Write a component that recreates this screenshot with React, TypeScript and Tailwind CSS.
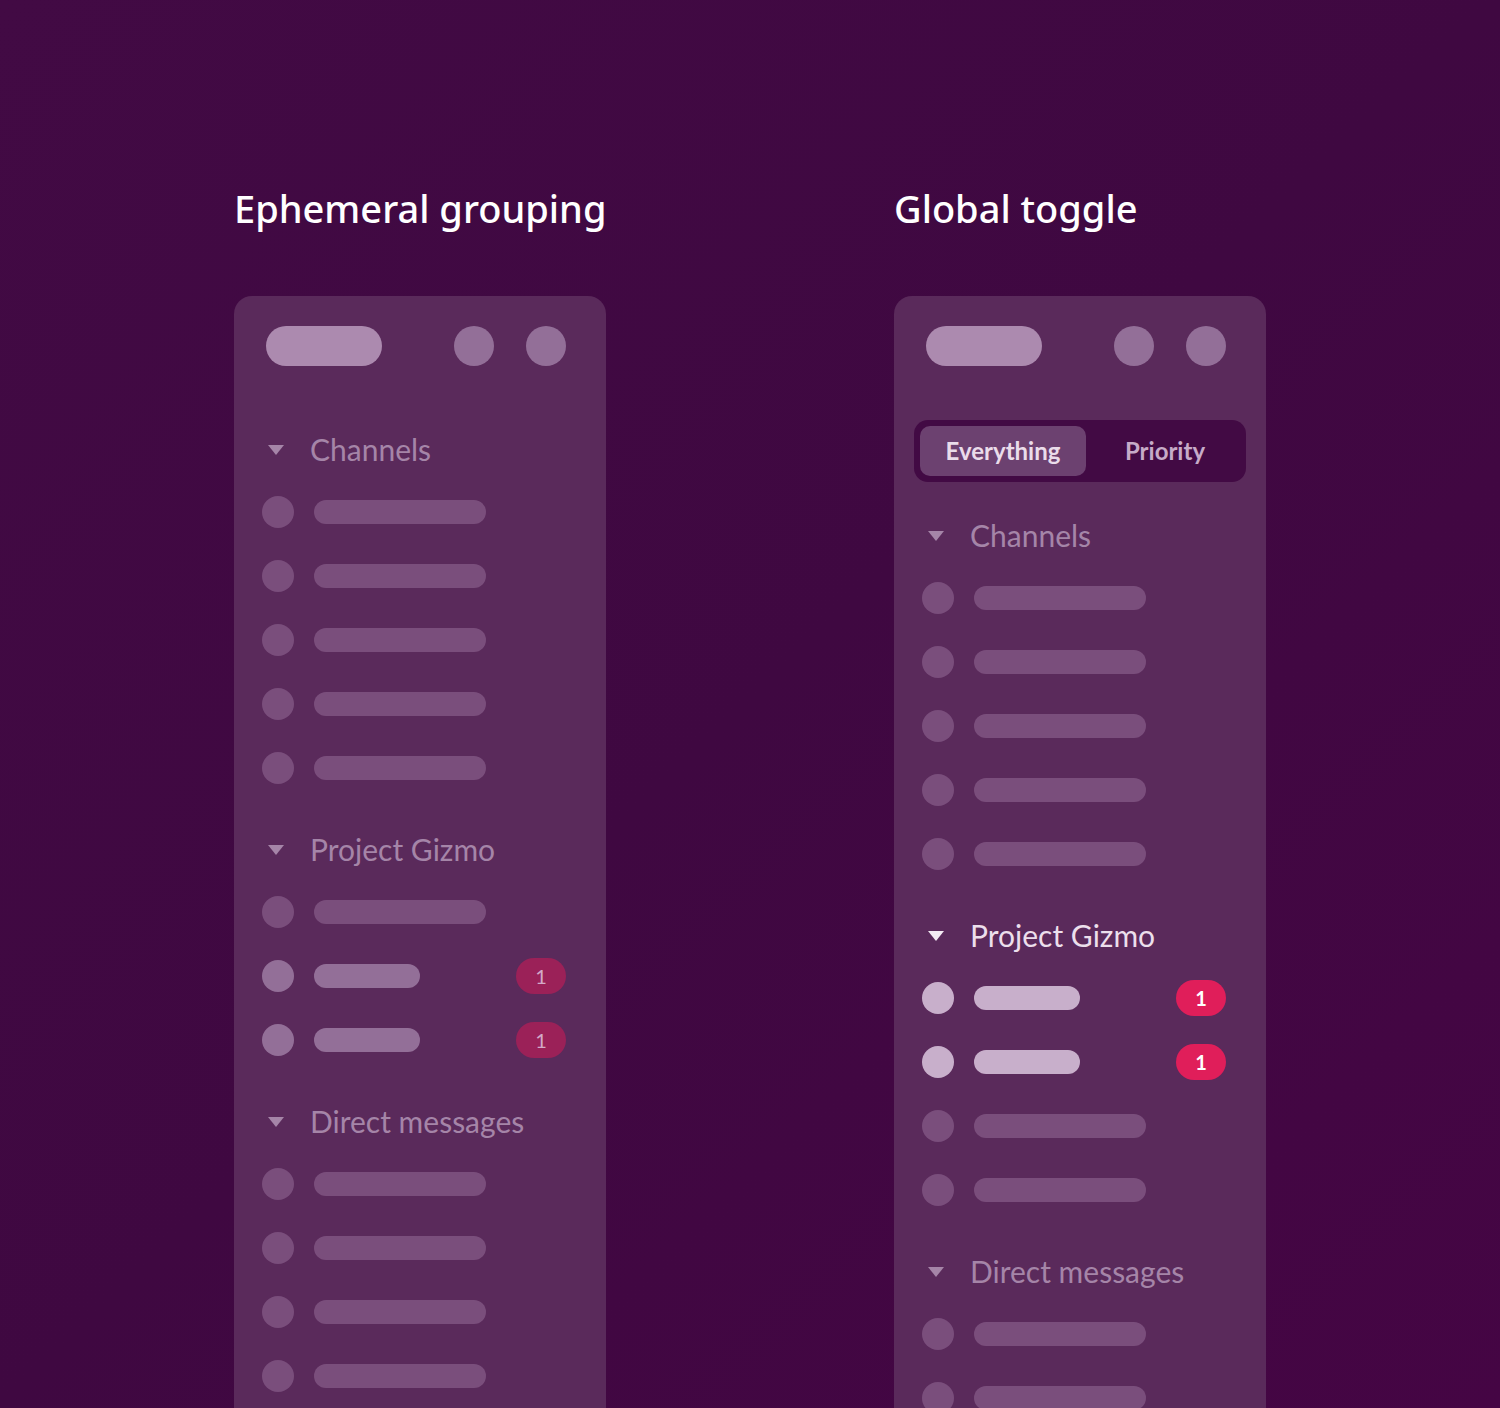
const DIM = 'bg-[#7a4e7c]';

type Row = { short?: boolean; badge?: 'muted' | 'hot' };

function Caret({ bright }: { bright?: boolean }) {
  return (
    <svg width="16" height="10" viewBox="0 0 16 10" className="ml-[6px] shrink-0">
      <path d="M0 0 H16 L8 10 Z" fill={bright ? '#f3eaf3' : '#a585a8'} />
    </svg>
  );
}

function Header({ label, bright, className }: { label: string; bright?: boolean; className: string }) {
  return (
    <div className={`flex items-center h-10 ${className}`}>
      <Caret bright={bright} />
      <span
        className={`ml-[26px] pb-[3px] text-[30px] leading-10 font-['Lato',sans-serif] ${
          bright ? 'text-[#ecdfec]' : 'text-[#a585a8]'
        }`}
      >
        {label}
      </span>
    </div>
  );
}

function Rows({ rows, className = '' }: { rows: Row[]; className?: string }) {
  return (
    <div className={`flex flex-col gap-8 ${className}`}>
      {rows.map((r, i) => {
        const tone = r.badge === 'hot' ? 'bg-[#c8afcb]' : r.badge === 'muted' ? 'bg-[#936f98]' : DIM;
        return (
          <div key={i} className="flex items-center h-8">
            <div className={`w-8 h-8 rounded-full ${tone}`} />
            <div className={`ml-5 h-6 rounded-full ${tone} ${r.short ? 'w-[106px]' : 'w-[172px]'}`} />
            {r.badge && (
              <div
                className={`ml-auto w-[50px] h-9 rounded-full flex items-center justify-center text-[20px] font-['Lato',sans-serif] ${
                  r.badge === 'hot' ? 'bg-[#e01e5a] text-white font-bold' : 'bg-[#9b2158] text-[#d3a9c8]'
                }`}
              >
                1
              </div>
            )}
          </div>
        );
      })}
    </div>
  );
}

function TopBar() {
  return (
    <div className="flex items-center pt-[30px]">
      <div className="ml-1 w-[116px] h-10 rounded-full bg-[#ac8aaf]" />
      <div className="ml-auto w-10 h-10 rounded-full bg-[#936f98]" />
      <div className="ml-8 w-10 h-10 rounded-full bg-[#936f98]" />
    </div>
  );
}

const five: Row[] = [{}, {}, {}, {}, {}];

export default function App() {
  return (
    <div className="h-[1408px] overflow-hidden bg-gradient-to-br from-[#420a44] via-[#3f0841] to-[#450544]">
      <div className="flex gap-[288px] pl-[234px] pt-[184px]">
        {/* Ephemeral grouping */}
        <div className="w-[372px]">
          <h2 className="whitespace-nowrap text-[38px] leading-[48px] font-medium text-white font-['Noto_Sans',sans-serif]">
            Ephemeral grouping
          </h2>
          <div className="mt-16 h-[1200px] rounded-t-[18px] bg-[#5a2a5b] pl-7 pr-10">
            <TopBar />
            <Header label="Channels" className="mt-16" />
            <Rows rows={five} className="mt-[26px]" />
            <Header label="Project Gizmo" className="mt-[46px]" />
            <Rows rows={[{}, { short: true, badge: 'muted' }, { short: true, badge: 'muted' }]} className="mt-[26px]" />
            <Header label="Direct messages" className="mt-[46px]" />
            <Rows rows={[{}, {}, {}, {}, {}]} className="mt-[26px]" />
          </div>
        </div>

        {/* Global toggle */}
        <div className="w-[372px]">
          <h2 className="whitespace-nowrap text-[38px] leading-[48px] font-medium text-white font-['Noto_Sans',sans-serif]">
            Global toggle
          </h2>
          <div className="mt-16 h-[1200px] rounded-t-[18px] bg-[#5a2a5b] pl-7 pr-10">
            <TopBar />
            <div className="mt-[54px] -ml-2 -mr-5 h-[62px] rounded-[14px] bg-[#420a44] p-[6px] flex font-['Lato',sans-serif] font-bold text-[24px]">
              <div className="w-[166px] rounded-[10px] bg-[#6c4170] text-[#eadcea] flex items-center justify-center">
                Everything
              </div>
              <div className="flex-1 pl-1 text-[#c6abc8] flex items-center justify-center">Priority</div>
            </div>
            <Header label="Channels" className="mt-[34px]" />
            <Rows rows={five} className="mt-[26px]" />
            <Header label="Project Gizmo" bright className="mt-[46px]" />
            <Rows
              rows={[{ short: true, badge: 'hot' }, { short: true, badge: 'hot' }, {}, {}]}
              className="mt-[26px]"
            />
            <Header label="Direct messages" className="mt-[46px]" />
            <Rows rows={[{}, {}, {}]} className="mt-[26px]" />
          </div>
        </div>
      </div>
    </div>
  );
}
